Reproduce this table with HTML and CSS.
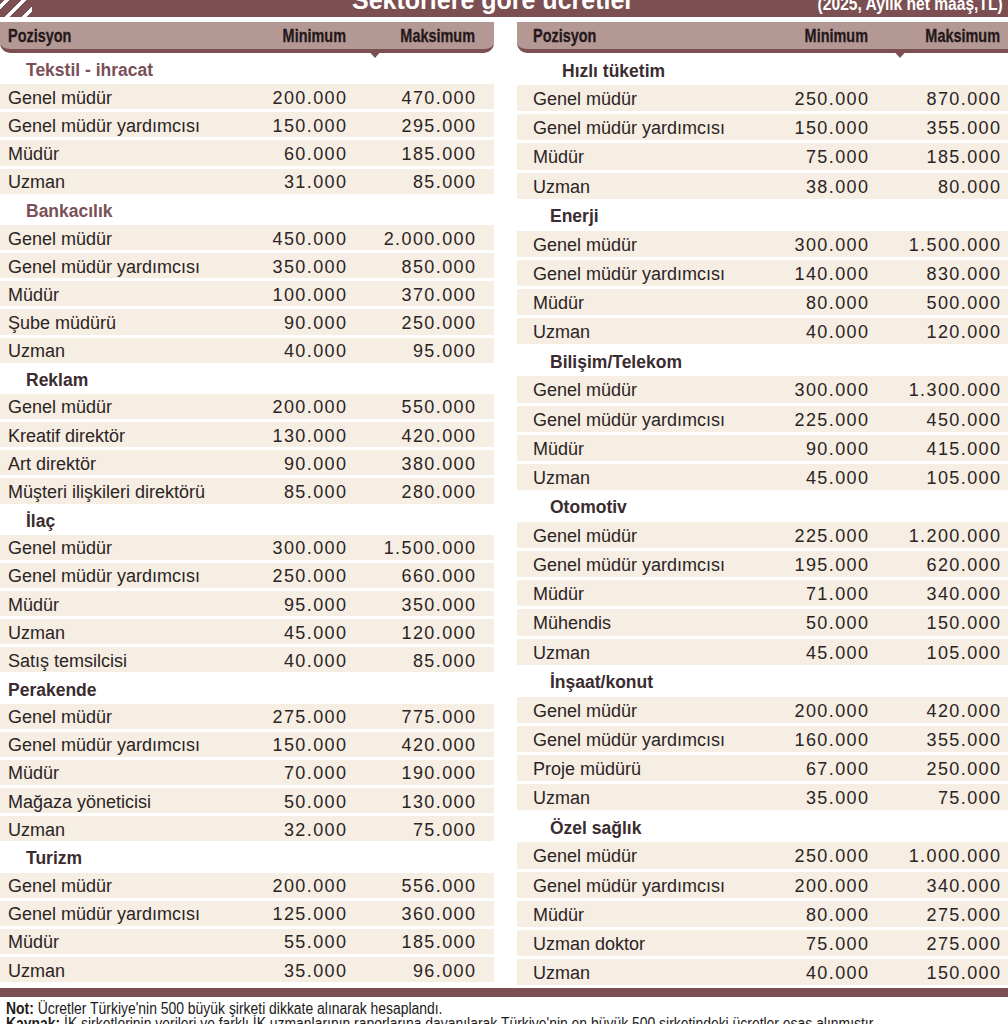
FILE: index.html
```html
<!DOCTYPE html>
<html lang="tr">
<head>
<meta charset="utf-8">
<title>Sektörlere göre ücretler</title>
<link rel="stylesheet" href="styles.css">
</head>
<body>
<div class="page">
  <div class="topbar">
    <span class="stripes"></span>
    <h1 class="title">Sektörlere göre ücretler</h1>
    <span class="unit">(2025, Aylık net maaş,TL)</span>
  </div>

  <div class="cols">
    <section class="col col-left">
      <div class="thead">
        <span class="hd">Pozisyon</span><span class="hd num">Minimum</span><span class="hd num">Maksimum</span>
        <i class="notch"></i>
      </div>
      <div class="tbody">
        <div class="sec brown">Tekstil - ihracat</div>
        <div class="row"><span>Genel müdür</span><span class="num">200.000</span><span class="num">470.000</span></div>
        <div class="row"><span>Genel müdür yardımcısı</span><span class="num">150.000</span><span class="num">295.000</span></div>
        <div class="row"><span>Müdür</span><span class="num">60.000</span><span class="num">185.000</span></div>
        <div class="row"><span>Uzman</span><span class="num">31.000</span><span class="num">85.000</span></div>
        <div class="sec brown">Bankacılık</div>
        <div class="row"><span>Genel müdür</span><span class="num">450.000</span><span class="num">2.000.000</span></div>
        <div class="row"><span>Genel müdür yardımcısı</span><span class="num">350.000</span><span class="num">850.000</span></div>
        <div class="row"><span>Müdür</span><span class="num">100.000</span><span class="num">370.000</span></div>
        <div class="row"><span>Şube müdürü</span><span class="num">90.000</span><span class="num">250.000</span></div>
        <div class="row"><span>Uzman</span><span class="num">40.000</span><span class="num">95.000</span></div>
        <div class="sec">Reklam</div>
        <div class="row"><span>Genel müdür</span><span class="num">200.000</span><span class="num">550.000</span></div>
        <div class="row"><span>Kreatif direktör</span><span class="num">130.000</span><span class="num">420.000</span></div>
        <div class="row"><span>Art direktör</span><span class="num">90.000</span><span class="num">380.000</span></div>
        <div class="row"><span>Müşteri ilişkileri direktörü</span><span class="num">85.000</span><span class="num">280.000</span></div>
        <div class="sec">İlaç</div>
        <div class="row"><span>Genel müdür</span><span class="num">300.000</span><span class="num">1.500.000</span></div>
        <div class="row"><span>Genel müdür yardımcısı</span><span class="num">250.000</span><span class="num">660.000</span></div>
        <div class="row"><span>Müdür</span><span class="num">95.000</span><span class="num">350.000</span></div>
        <div class="row"><span>Uzman</span><span class="num">45.000</span><span class="num">120.000</span></div>
        <div class="row"><span>Satış temsilcisi</span><span class="num">40.000</span><span class="num">85.000</span></div>
        <div class="sec flush">Perakende</div>
        <div class="row"><span>Genel müdür</span><span class="num">275.000</span><span class="num">775.000</span></div>
        <div class="row"><span>Genel müdür yardımcısı</span><span class="num">150.000</span><span class="num">420.000</span></div>
        <div class="row"><span>Müdür</span><span class="num">70.000</span><span class="num">190.000</span></div>
        <div class="row"><span>Mağaza yöneticisi</span><span class="num">50.000</span><span class="num">130.000</span></div>
        <div class="row"><span>Uzman</span><span class="num">32.000</span><span class="num">75.000</span></div>
        <div class="sec">Turizm</div>
        <div class="row"><span>Genel müdür</span><span class="num">200.000</span><span class="num">556.000</span></div>
        <div class="row"><span>Genel müdür yardımcısı</span><span class="num">125.000</span><span class="num">360.000</span></div>
        <div class="row"><span>Müdür</span><span class="num">55.000</span><span class="num">185.000</span></div>
        <div class="row"><span>Uzman</span><span class="num">35.000</span><span class="num">96.000</span></div>
      </div>
    </section>

    <section class="col col-right">
      <div class="thead">
        <span class="hd">Pozisyon</span><span class="hd num">Minimum</span><span class="hd num">Maksimum</span>
        <i class="notch"></i>
      </div>
      <div class="tbody">
        <div class="sec deep">Hızlı tüketim</div>
        <div class="row"><span>Genel müdür</span><span class="num">250.000</span><span class="num">870.000</span></div>
        <div class="row"><span>Genel müdür yardımcısı</span><span class="num">150.000</span><span class="num">355.000</span></div>
        <div class="row"><span>Müdür</span><span class="num">75.000</span><span class="num">185.000</span></div>
        <div class="row"><span>Uzman</span><span class="num">38.000</span><span class="num">80.000</span></div>
        <div class="sec">Enerji</div>
        <div class="row"><span>Genel müdür</span><span class="num">300.000</span><span class="num">1.500.000</span></div>
        <div class="row"><span>Genel müdür yardımcısı</span><span class="num">140.000</span><span class="num">830.000</span></div>
        <div class="row"><span>Müdür</span><span class="num">80.000</span><span class="num">500.000</span></div>
        <div class="row"><span>Uzman</span><span class="num">40.000</span><span class="num">120.000</span></div>
        <div class="sec">Bilişim/Telekom</div>
        <div class="row"><span>Genel müdür</span><span class="num">300.000</span><span class="num">1.300.000</span></div>
        <div class="row"><span>Genel müdür yardımcısı</span><span class="num">225.000</span><span class="num">450.000</span></div>
        <div class="row"><span>Müdür</span><span class="num">90.000</span><span class="num">415.000</span></div>
        <div class="row"><span>Uzman</span><span class="num">45.000</span><span class="num">105.000</span></div>
        <div class="sec">Otomotiv</div>
        <div class="row"><span>Genel müdür</span><span class="num">225.000</span><span class="num">1.200.000</span></div>
        <div class="row"><span>Genel müdür yardımcısı</span><span class="num">195.000</span><span class="num">620.000</span></div>
        <div class="row"><span>Müdür</span><span class="num">71.000</span><span class="num">340.000</span></div>
        <div class="row"><span>Mühendis</span><span class="num">50.000</span><span class="num">150.000</span></div>
        <div class="row"><span>Uzman</span><span class="num">45.000</span><span class="num">105.000</span></div>
        <div class="sec">İnşaat/konut</div>
        <div class="row"><span>Genel müdür</span><span class="num">200.000</span><span class="num">420.000</span></div>
        <div class="row"><span>Genel müdür yardımcısı</span><span class="num">160.000</span><span class="num">355.000</span></div>
        <div class="row"><span>Proje müdürü</span><span class="num">67.000</span><span class="num">250.000</span></div>
        <div class="row"><span>Uzman</span><span class="num">35.000</span><span class="num">75.000</span></div>
        <div class="sec">Özel sağlık</div>
        <div class="row"><span>Genel müdür</span><span class="num">250.000</span><span class="num">1.000.000</span></div>
        <div class="row"><span>Genel müdür yardımcısı</span><span class="num">200.000</span><span class="num">340.000</span></div>
        <div class="row"><span>Müdür</span><span class="num">80.000</span><span class="num">275.000</span></div>
        <div class="row"><span>Uzman doktor</span><span class="num">75.000</span><span class="num">275.000</span></div>
        <div class="row"><span>Uzman</span><span class="num">40.000</span><span class="num">150.000</span></div>
      </div>
    </section>
  </div>

  <div class="bottombar"></div>
  <div class="notes">
    <p><b>Not:</b> Ücretler Türkiye'nin 500 büyük şirketi dikkate alınarak hesaplandı.</p>
    <p><b>Kaynak:</b> İK şirketlerinin verileri ve farklı İK uzmanlarının raporlarına dayanılarak Türkiye'nin en büyük 500 şirketindeki ücretler esas alınmıştır.</p>
  </div>
</div>
</body>
</html>
```

FILE: styles.css
```css
* { box-sizing: border-box; }
html, body { margin: 0; padding: 0; background: #fff; }
body {
  font-family: "Liberation Sans", Arial, sans-serif;
  color: #2b2424;
  width: 1008px;
  height: 1024px;
  overflow: hidden;
}
.page { width: 1008px; }

/* top title bar */
.topbar {
  height: 17px;
  background: #7c5052;
  display: flex;
  align-items: flex-start;
  overflow: hidden;
  position: relative;
}
.stripes {
  width: 32px;
  height: 17px;
  flex: none;
  background: repeating-linear-gradient(135deg, transparent 0 3px, #fff 3px 7px, transparent 7px 12px);
}
.title {
  margin: -12px 0 0 320px;
  font-size: 25px;
  line-height: 25px;
  font-weight: bold;
  color: #fff;
  white-space: nowrap;
}
.unit {
  display: inline-block;
  margin: -6px 5px 0 auto;
  font-size: 19px;
  line-height: 19px;
  font-weight: bold;
  color: #fff;
  white-space: nowrap;
  transform: scaleX(0.82);
  transform-origin: right center;
}

/* columns */
.cols {
  display: flex;
  gap: 23px;
  margin-top: 5px;
}
.col-left { width: 494px; }
.col-right { width: 491px; }

.thead {
  position: relative;
  height: 31px;
  background: #b49894;
  border-bottom: 4px solid #7c5052;
  border-radius: 0 0 10px 10px;
  display: grid;
  align-items: center;
  font-weight: bold;
  font-size: 19px;
  color: #24181a;
}
.hd {
  white-space: nowrap;
  transform: scaleX(0.76);
  transform-origin: left center;
  -webkit-text-stroke: 0.3px #24181a;
}
.hd.num { transform-origin: right center; }
.notch {
  position: absolute;
  top: 27px;
  width: 0;
  height: 0;
  border-left: 8px solid transparent;
  border-right: 8px solid transparent;
  border-top: 9px solid #7c5052;
}
.col-left .notch { left: 367px; }
.col-right .notch { left: 375px; }

.col-left .thead,
.col-left .row { grid-template-columns: 1fr 130px 129px; padding: 0 19px 0 8px; }
.col-right .thead,
.col-right .row { grid-template-columns: 1fr 130px 132px; padding: 0 8px 0 16px; }
.col-right .thead { border-radius: 0 0 0 10px; }

.tbody { margin-top: 3px; }
.col-left .row, .col-left .sec { height: 28.16px; }
.col-right .row, .col-right .sec { height: 29.13px; }

.row {
  display: grid;
  align-items: center;
  background: #f6eee3;
  border-bottom: 3px solid #fff;
  padding-top: 3px !important;
  font-size: 18px;
  white-space: nowrap;
}
.num { text-align: right; }
.row .num { letter-spacing: 1.4px; margin-right: -1.4px; }

.sec {
  display: flex;
  align-items: center;
  font-weight: bold;
  font-size: 17.5px;
  color: #3a2c30;
  padding-top: 1px;
}
.col-left .sec { padding-left: 26px; }
.col-left .sec.flush { padding-left: 8px; }
.col-left .sec.brown { color: #7a4f57; }
.col-right .sec { padding-left: 33px; }
.col-right .sec.deep { padding-left: 45px; }

.bottombar {
  height: 9px;
  background: #7c5052;
}
.notes {
  padding: 4px 0 0 6px;
  font-size: 16px;
  line-height: 15px;
  color: #221a1a;
}
.notes p {
  margin: 0;
  white-space: nowrap;
  transform: scaleX(0.87);
  transform-origin: left center;
}
.notes b { font-weight: bold; }
```
